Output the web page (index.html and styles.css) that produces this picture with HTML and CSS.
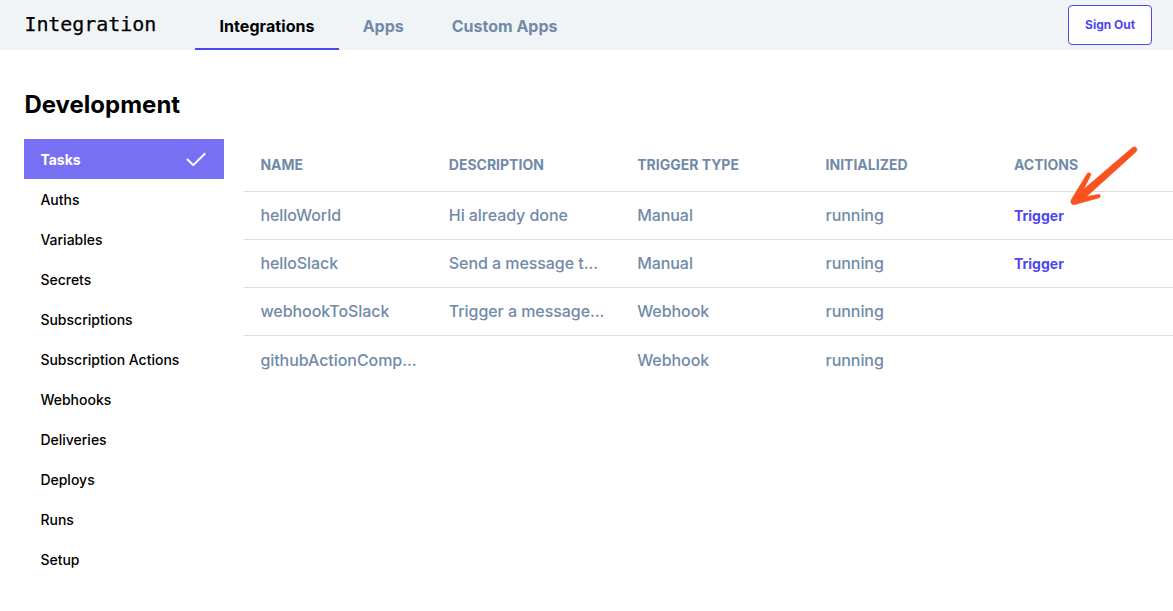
FILE: index.html
```html
<!DOCTYPE html>
<html lang="en">
<head>
<meta charset="utf-8">
<title>Integration</title>
<link rel="stylesheet" href="styles.css">
</head>
<body>
<header class="topbar">
  <div class="brand">Integration</div>
  <nav class="tabs">
    <a class="tab active">Integrations</a>
    <a class="tab">Apps</a>
    <a class="tab">Custom Apps</a>
  </nav>
  <button class="signout">Sign Out</button>
</header>
<h1 class="title">Development</h1>
<main class="layout">
  <nav class="side">
    <a class="item selected">Tasks
      <svg class="check" width="24" height="24" viewBox="0 0 24 24"><path d="M3 12 9.2 18.2 21.3 6.2" fill="none" stroke="#fff" stroke-width="2"/></svg>
    </a>
    <a class="item">Auths</a>
    <a class="item">Variables</a>
    <a class="item">Secrets</a>
    <a class="item">Subscriptions</a>
    <a class="item">Subscription Actions</a>
    <a class="item">Webhooks</a>
    <a class="item">Deliveries</a>
    <a class="item">Deploys</a>
    <a class="item">Runs</a>
    <a class="item">Setup</a>
  </nav>
  <section class="table">
    <div class="row head"><span>NAME</span><span>DESCRIPTION</span><span>TRIGGER TYPE</span><span>INITIALIZED</span><span>ACTIONS</span></div>
    <div class="row"><span>helloWorld</span><span>Hi already done</span><span>Manual</span><span>running</span><a class="trigger">Trigger</a></div>
    <div class="row"><span>helloSlack</span><span>Send a message t...</span><span>Manual</span><span>running</span><a class="trigger">Trigger</a></div>
    <div class="row"><span>webhookToSlack</span><span>Trigger a message...</span><span>Webhook</span><span>running</span><span></span></div>
    <div class="row last"><span>githubActionComp...</span><span></span><span>Webhook</span><span>running</span><span></span></div>
  </section>
</main>
<svg class="arrow" width="76" height="66" viewBox="1065 143 76 66">
  <path d="M1132.5 147.6C1135.5 145.3 1138.4 149 1136 151.8L1086.5 196.6 1098.2 194.6C1100.6 194.2 1101.2 196.8 1099 197.8L1075 204.4C1071.7 205.2 1070 202.5 1071.3 199.8L1087 173.9C1088.4 171.9 1091.4 173 1090.6 175.2L1083.5 189.5Z" fill="#f9521e" stroke="#f9521e" stroke-width=".7"/>
</svg>
</body>
</html>
```

FILE: styles.css
```css
* { box-sizing: border-box; }
body { margin: 0; height: 611px; overflow: hidden; position: relative; background: #fff; color: #000; font-family: Inter, sans-serif; }
.topbar { display: flex; height: 50px; padding-left: 24.4px; padding-right: 20.6px; background: #f0f4f7; }
.brand { width: 171px; font: 20px/48px "DejaVu Sans Mono", monospace; letter-spacing: -0.05px; -webkit-text-stroke: 0.25px #000; }
.tabs { display: flex; flex: 1; }
.tab { padding: 0 24px; font-size: 16px; font-weight: 700; line-height: 52px; height: 50px; color: #718aa8; white-space: nowrap; }
.tab.active { color: #000; letter-spacing: 0.08px; border-bottom: 2px solid #5046f0; }
.signout { width: 84.5px; height: 40px; margin-top: 5px; padding: 0 0 2px; border: 1px solid #5046f0; border-radius: 4px; background: #fff; color: #5046f0; font: 700 12px Inter, sans-serif; }
.title { margin: 39px 0 0 24.4px; font-size: 24px; line-height: 32px; font-weight: 700; }
.layout { display: flex; margin-top: 18px; padding-left: 24.4px; }
.side { width: 200px; margin-right: 20px; flex: none; }
.item { display: flex; align-items: center; justify-content: space-between; height: 40px; padding: 0 16px; font-size: 14px; font-weight: 500; }
.selected { background: #7770f2; color: #fff; font-weight: 700; }
.table { flex: 1; }
.row { display: grid; grid-template-columns: repeat(5, 188.4px); height: 48px; border-bottom: 1px solid #ddd; align-items: center; padding: 0 0 1px 16px; font-size: 16px; font-weight: 500; letter-spacing: -0.06px; color: #718aa8; white-space: nowrap; overflow: hidden; }
.row.last { border-bottom: 0; }
.head { height: 53px; font-size: 14px; font-weight: 700; letter-spacing: 0; }
.trigger { color: #5046f0; font-size: 14px; font-weight: 700; letter-spacing: 0; }
.arrow { position: absolute; left: 1065px; top: 143px; }
```
